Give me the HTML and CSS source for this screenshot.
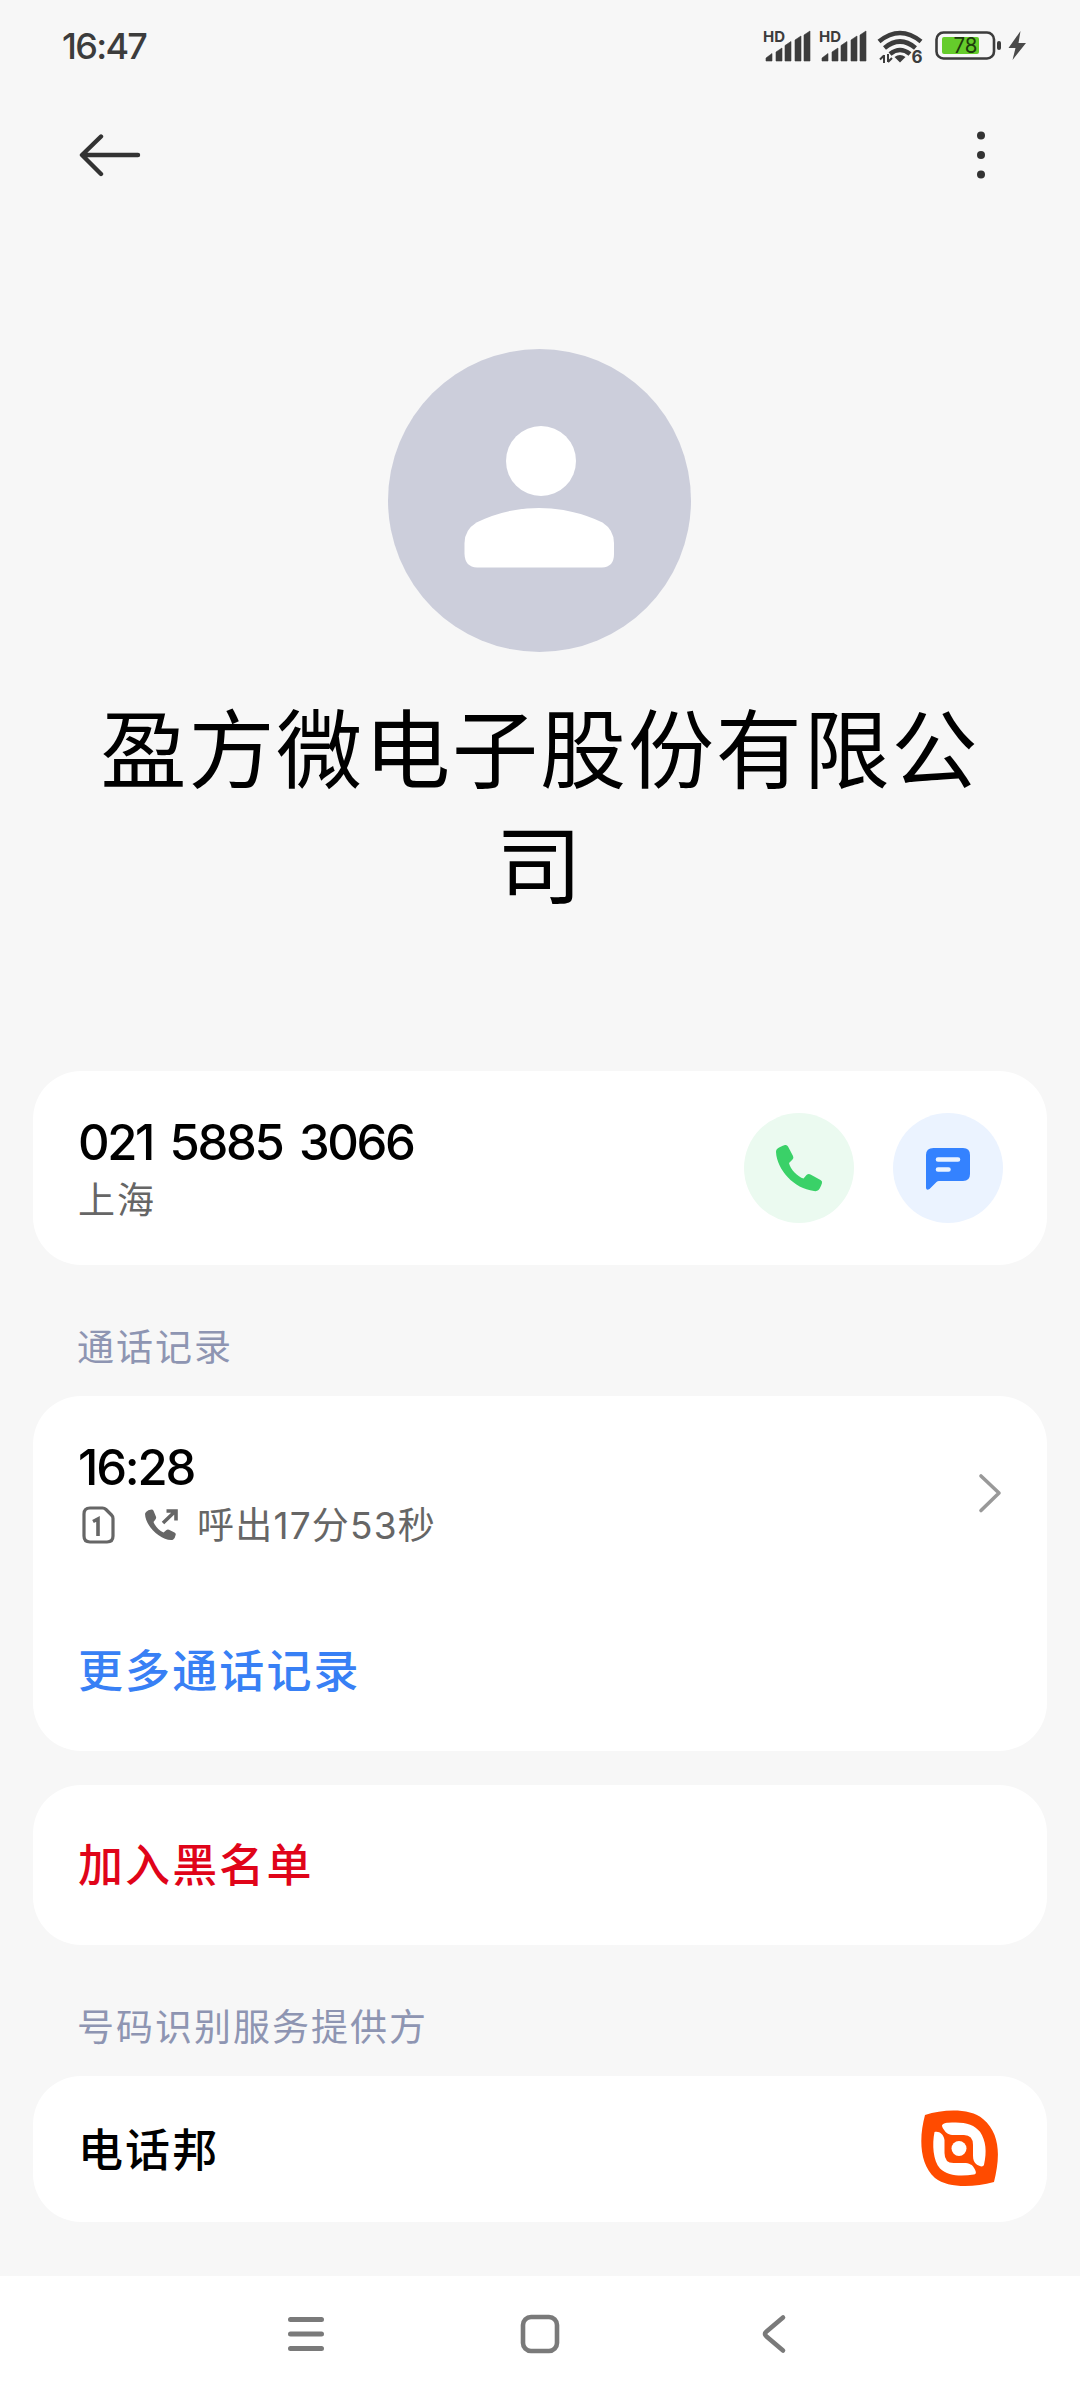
FILE: index.html
```html
<!DOCTYPE html>
<html lang="zh-CN">
<head>
    <meta charset="UTF-8">
    <title>通话详情</title>
    <link rel="stylesheet" href="styles.css">
</head>
<body>
    <div class="status-bar">
        <span class="clock">16:47</span>
        <svg class="status-icons" width="270" height="48" viewBox="-6 -6 270 48">
            <g fill="#3c3c3c">
                <text class="hd" x="-1" y="12" textLength="22">HD</text>
                <path id="bars" d="M2 31v-3l6-4.500V31zM12 31v-9l6-4v13zM21 31V15.500l6-4V31zM31 31V10l6-4v25zM40 31V5l6-4v30z" stroke="#3c3c3c" stroke-width=".6" stroke-linejoin="round"/>
                <text class="hd" x="55" y="12" textLength="22">HD</text>
                <use href="#bars" x="56"/>
                <path d="M130.500 27q5.500-4 11 0l-5.500 5.500z"/>
            </g>
            <g fill="none" stroke="#3c3c3c" stroke-width="4.600">
                <path d="M115 11.500q21-17 42 0M120.500 18q15.500-13 31 0M126 24q10-8 20 0"/>
            </g>
            <path d="M120 33v-8M116 29.500l4-4M124 24v8M124 32l4-4" fill="none" stroke="#3c3c3c" stroke-width="2"/>
            <text class="wifi-gen" x="147.500" y="32.500">6</text>
            <rect x="172.500" y="2.500" width="57.500" height="26" rx="7" fill="none" stroke="#3c3c3c" stroke-width="2.600"/>
            <rect x="178" y="7" width="37" height="17" rx="2" fill="#65cc2b"/>
            <rect x="233" y="11" width="4" height="9" rx="2" fill="#3c3c3c"/>
            <text class="battery" x="189.500" y="23" textLength="24" lengthAdjust="spacingAndGlyphs">78</text>
            <path d="M256.500 1l-12 17h7l-3 12 13.500-17h-7.500z" fill="#4a4a4a"/>
        </svg>
    </div>

    <div class="toolbar">
        <svg width="64" height="50" viewBox="0 0 64 50" fill="none" stroke="#333" stroke-width="4.400" stroke-linecap="round" stroke-linejoin="round">
            <path d="M22 6.500L3 25l19 19M4 25h55"/>
        </svg>
        <svg width="10" height="50" viewBox="0 0 10 50" fill="#333">
            <circle cx="5" cy="5.500" r="4"/>
            <circle cx="5" cy="25" r="4"/>
            <circle cx="5" cy="44.500" r="4"/>
        </svg>
    </div>

    <div class="profile">
        <svg class="avatar" width="304" height="304" viewBox="0 0 304 304">
            <circle cx="151.500" cy="151.500" r="151.500" fill="#cccedb"/>
            <circle cx="153" cy="112" r="35" fill="#fff"/>
            <path d="M76.500 194q0-13 12-20.500Q118 159 151 159t63.500 14.500q11.500 7.500 11.500 20.500v11q0 13-12 13.500H89q-12-.5-12.500-13.500z" fill="#fff"/>
        </svg>
        <h1 class="name">盈方微电子股份有限公司</h1>
    </div>

    <div class="card number-card">
        <div class="info">
            <div class="primary number">021 5885 3066</div>
            <div class="secondary">上海</div>
        </div>
        <div class="actions">
            <div class="action call">
                <svg width="110" height="110" viewBox="0 0 110 110" fill="#3ad168">
                    <path d="M33 36c2-2 5-3 8-4q2-.5 3 1.500l5 9.500q1 2-.5 3.500L45 50c1 6 9 14 14.500 15.500L62.500 62q2-1.500 4-.5l10 5.500q2 1 1.500 3c-1 3-2 5.500-3.500 7q-1.500 1.500-4.500 1C50 75.500 33 57 32 39q0-2 1-3z"/>
                </svg>
            </div>
            <div class="action message">
                <svg width="110" height="110" viewBox="0 0 110 110">
                    <path d="M40.500 35H70q7 0 7 7v19q0 7-7 7H46q-1.500 0-2.500 1l-7 7q-3 2-3.500-1V42q0-7 7.500-7z" fill="#3482ff"/>
                    <path d="M45 46.500h20M45 56.500h10.500" stroke="#ebf3ff" stroke-width="4.600" stroke-linecap="round"/>
                </svg>
            </div>
        </div>
    </div>

    <div class="section-title">通话记录</div>
    <div class="card log-card">
        <div class="log-row">
            <div class="info">
                <div class="primary time">16:28</div>
                <div class="log-detail">
                    <svg class="sim" width="34" height="40" viewBox="0 0 34 40" fill="none" stroke="#666">
                        <path d="M8 3h12.500q2 0 3.500 1.500l5.500 5.500q1.500 1.500 1.500 3.500V31q0 6-6 6H8q-6 0-6-6V9q0-6 6-6z" stroke-width="3.200"/>
                        <path d="M11 16.500l5-2.500v17" stroke-width="3.600"/>
                    </svg>
                    <svg class="outgoing" width="36" height="36" viewBox="0 0 36 36">
                        <path d="M3 5q2-2.500 5.500-2.500 1.500 0 2 1.200l2.500 6q.5 1.500-.6 2.800L10.500 15c1.500 4 5.500 8.500 10 10.500l3-2.500q1-1 2.500-.3l5.500 2.800q1.500.7 1.200 2.300-.5 3.200-2.700 5c-10 2-27.500-12-28-26z" fill="#666"/>
                        <path d="M20 16L33 3.500M23.500 4h9.500v9.500" fill="none" stroke="#666" stroke-width="3.600"/>
                    </svg>
                    <span>呼出17分53秒</span>
                </div>
            </div>
            <svg class="chevron" width="26" height="44" viewBox="0 0 26 44" fill="none" stroke="#999" stroke-width="3.600" stroke-linecap="round" stroke-linejoin="round">
                <path d="M5 5l18 17L5 39.500"/>
            </svg>
        </div>
        <div class="more">更多通话记录</div>
    </div>

    <div class="card block-card">加入黑名单</div>

    <div class="section-title">号码识别服务提供方</div>
    <div class="card provider-card">
        <span>电话邦</span>
        <svg width="80" height="80" viewBox="0 0 80 80">
            <path d="M5 6C24 0 50-1 63 10 81 25 80 49 74 73 52 79 28 79 15 69-1 55-1 28 5 6z" fill="#ff4b00"/>
            <path d="M22 17c0-2 3-3 6-3.200 15-1.500 26 1 32 9 6 9 7 20 4 33-1 3-5 1-7 0-3-2-4-5-4-9V36q0-10-9-10H34c-5 0-8-2-9.500-4.500q-2-2-2.500-4.500zM14.500 23c5-1 9 2 10 8v13q0 10 9 10H44c5 0 9 2 10 5 2 3 3 6 0 6.500-12 2-26 2-34-6-7-8-8-24-5.500-36.500z" fill="#fff"/>
            <circle cx="39" cy="39.500" r="7.500" fill="#fff"/>
        </svg>
    </div>

    <div class="nav-bar">
        <svg width="40" height="44" viewBox="0 0 40 44" stroke="#7a7a7a" stroke-width="5" stroke-linecap="round">
            <path d="M4.500 7.500h31M4.500 22h31M4.500 36.500h31"/>
        </svg>
        <svg class="home" width="44" height="44" viewBox="0 0 44 44" fill="none" stroke="#7a7a7a" stroke-width="4.600">
            <rect x="5" y="5" width="34" height="34" rx="8"/>
        </svg>
        <svg width="30" height="44" viewBox="0 0 30 44" fill="none" stroke="#7a7a7a" stroke-width="4.600" stroke-linecap="round">
            <path d="M24 5.500L7.500 19.500q-3 2.500 0 5L24 38.500"/>
        </svg>
    </div>
</body>
</html>
```

FILE: styles.css
```css
* {
    margin: 0;
    padding: 0;
    box-sizing: border-box;
}

body {
    width: 1080px;
    height: 2400px;
    background: #f7f7f7;
    color: #000;
    font-family: 'Noto Sans CJK SC', sans-serif;
    display: flex;
    flex-direction: column;
    overflow: hidden;
}

svg {
    display: block;
    flex-shrink: 0;
}

.status-bar {
    height: 92px;
    padding: 0 52px 0 62px;
    display: flex;
    align-items: center;
    justify-content: space-between;
}

.clock {
    font: 500 36px/40px Inter, sans-serif;
    color: #3c3c3c;
    letter-spacing: -1.700px;
}

.status-icons {
    margin-top: 3px;
    overflow: visible;
}

.hd {
    font: 700 15px Inter, sans-serif;
}

.wifi-gen {
    font: 700 17px Inter, sans-serif;
    fill: #3c3c3c;
}

.battery {
    font: 400 22px Inter, sans-serif;
    fill: #1d3b0c;
}

.toolbar {
    height: 126px;
    padding: 0 94px 0 79px;
    display: flex;
    align-items: center;
    justify-content: space-between;
}

.profile {
    height: 853px;
    padding-top: 131px;
    display: flex;
    flex-direction: column;
    align-items: center;
}

.name {
    width: 900px;
    margin-top: 34px;
    font-size: 86px;
    font-weight: 400;
    line-height: 116px;
    letter-spacing: 1.900px;
    text-align: center;
}

.card {
    margin: 0 33px;
    padding: 0 45px;
    background: #fff;
    border-radius: 48px;
    flex-shrink: 0;
}

.number-card {
    height: 194px;
    padding-right: 44px;
    display: flex;
    align-items: center;
    justify-content: space-between;
}

.primary {
    padding-top: 2px;
    font: 450 49px/58px Inter, sans-serif;
}

.number {
    letter-spacing: -2.400px;
    word-spacing: 6px;
}

.time {
    letter-spacing: -2.200px;
}

.secondary {
    font-size: 37px;
    line-height: 52px;
    letter-spacing: 2px;
    color: #666;
}

.actions {
    display: flex;
    gap: 39px;
}

.action {
    width: 110px;
    height: 110px;
    border-radius: 50%;
}

.call {
    background: #ebfaf0;
}

.message {
    background: #ebf3ff;
}

.section-title {
    height: 131px;
    padding: 54px 77px 0;
    font-size: 37px;
    line-height: 52px;
    letter-spacing: 2px;
    color: #8e95b2;
    flex-shrink: 0;
}

.log-card {
    height: 355px;
    padding-top: 41px;
}

.log-row {
    display: flex;
    align-items: center;
    justify-content: space-between;
}

.log-detail {
    height: 56px;
    display: flex;
    align-items: center;
    color: #666;
    font: 400 37px/52px Inter, 'Noto Sans CJK SC', sans-serif;
    letter-spacing: 1.200px;
}

.log-detail span {
    padding-top: 2px;
}

.sim {
    margin-left: 4px;
}

.outgoing {
    margin: 0 18px 0 27px;
}

.chevron {
    margin: 0 0 4px;
}

.more {
    margin-top: 86px;
    font-size: 45px;
    font-weight: 500;
    line-height: 60px;
    letter-spacing: 2.100px;
    color: #3880f5;
}

.block-card {
    height: 160px;
    margin-top: 34px;
    font-size: 45px;
    font-weight: 500;
    line-height: 156px;
    letter-spacing: 2.100px;
    color: #e00419;
}

.provider-card {
    height: 146px;
    padding: 0 47px 2px 45px;
    display: flex;
    align-items: center;
    justify-content: space-between;
    font-size: 45px;
    font-weight: 500;
    line-height: 60px;
    letter-spacing: 2.100px;
}

.provider-card svg {
    margin-top: 2px;
}

.nav-bar {
    height: 124px;
    margin-top: auto;
    padding: 0 291px 9px 286px;
    background: #fff;
    display: flex;
    align-items: center;
    justify-content: space-between;
    flex-shrink: 0;
}

.home {
    margin-right: 6px;
}
```
